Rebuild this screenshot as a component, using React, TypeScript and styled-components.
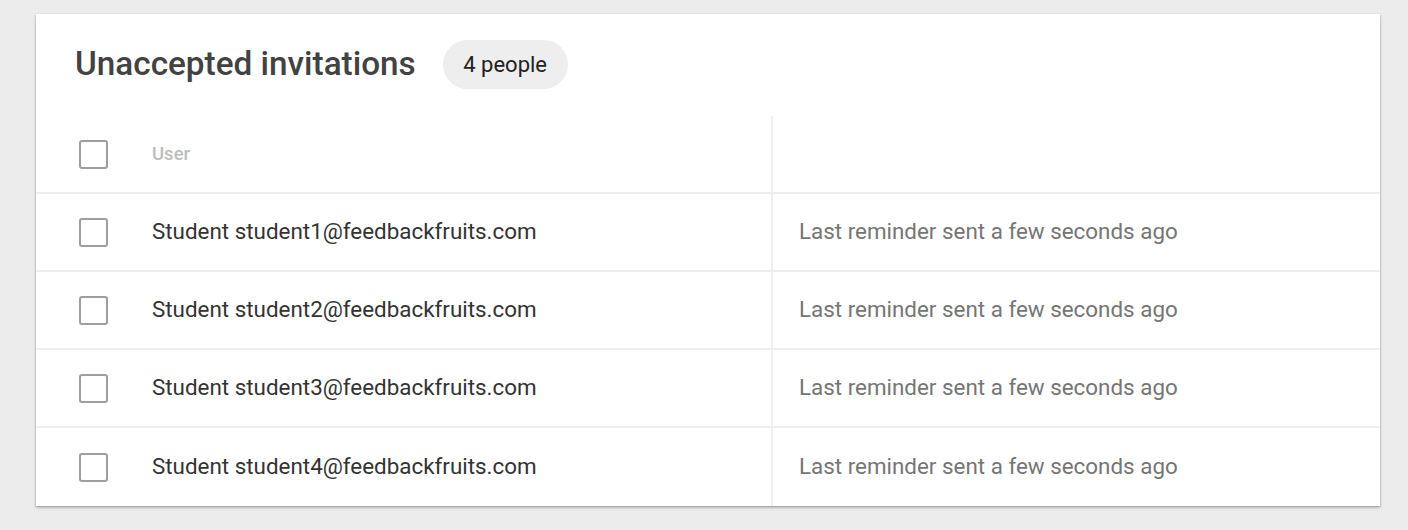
import React from "react";
import styled, { createGlobalStyle } from "styled-components";

const Global = createGlobalStyle`
  html, body { margin: 0; padding: 0; background: #ececec; }
  body { font-family: Roboto, "Noto Sans", Arial, sans-serif; }
  * { box-sizing: border-box; }
`;

const Page = styled.div`
  padding: 14px 28px 24px 36px;
`;

const Card = styled.section`
  width: 1344px;
  background: #ffffff;
  box-shadow: 0 1px 2px rgba(0, 0, 0, 0.3), 0 2px 4px rgba(0, 0, 0, 0.12);
`;

const Header = styled.header`
  display: flex;
  align-items: center;
  gap: 27px;
  padding: 26px 39px 27px 39px;
`;

const Title = styled.h1`
  margin: 0 0 2px;
  font-size: 33.3px;
  font-weight: 500;
  color: #424242;
`;

const Badge = styled.span`
  display: inline-flex;
  align-items: center;
  justify-content: center;
  height: 49px;
  padding: 0 20.5px;
  border-radius: 25px;
  background: #eeeeee;
  color: #212121;
  font-size: 22px;
`;

const Table = styled.div`
  display: grid;
  grid-template-columns: 737px 1fr;
`;

const Cell = styled.div<{ $last?: boolean }>`
  display: flex;
  align-items: center;
  height: 78px;
  border-bottom: ${(p) => (p.$last ? "none" : "2px solid #eeeeee")};
`;

const UserCell = styled(Cell)`
  padding-left: 43px;
  gap: 44px;
  border-right: 2px solid #eeeeee;
`;

const InfoCell = styled(Cell)`
  padding-left: 26px;
`;

const Box = styled.span`
  width: 29px;
  height: 29px;
  border: 2.5px solid #9e9e9e;
  border-radius: 3px;
  flex-shrink: 0;
`;

const HeadLabel = styled.span`
  font-size: 18.5px;
  font-weight: 500;
  color: #bdbdbd;
`;

const RowText = styled.span<{ $muted?: boolean }>`
  margin-bottom: 3px;
  font-size: 22.4px;
  color: ${(p) => (p.$muted ? "#757575" : "#333333")};
`;

const rows = [1, 2, 3, 4];

export default function App() {
  return (
    <>
      <Global />
      <Page>
        <Card>
          <Header>
            <Title>Unaccepted invitations</Title>
            <Badge>4 people</Badge>
          </Header>
          <Table>
            <UserCell>
              <Box />
              <HeadLabel>User</HeadLabel>
            </UserCell>
            <InfoCell />
            {rows.map((n, i) => (
              <React.Fragment key={n}>
                <UserCell $last={i === rows.length - 1}>
                  <Box />
                  <RowText>Student student{n}@feedbackfruits.com</RowText>
                </UserCell>
                <InfoCell $last={i === rows.length - 1}>
                  <RowText $muted>Last reminder sent a few seconds ago</RowText>
                </InfoCell>
              </React.Fragment>
            ))}
          </Table>
        </Card>
      </Page>
    </>
  );
}
